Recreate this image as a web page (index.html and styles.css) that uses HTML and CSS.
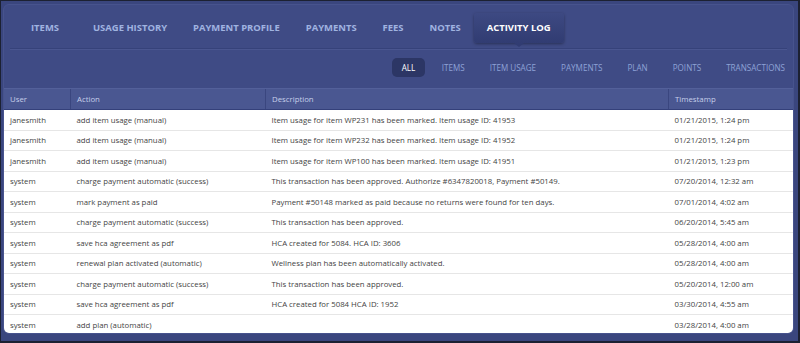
FILE: index.html
```html
<!DOCTYPE html>
<html lang="en">
<head>
    <meta charset="UTF-8">
    <title>Activity Log</title>
    <link rel="stylesheet" href="styles.css">
</head>
<body>
    <div class="frame">
        <div class="panel">
            <ul class="tabs">
                <li class="first">Items</li>
                <li>Usage History</li>
                <li>Payment Profile</li>
                <li>Payments</li>
                <li>Fees</li>
                <li>Notes</li>
                <li class="active">Activity Log</li>
            </ul>
            <ul class="filters">
                <li class="active">All</li>
                <li>Items</li>
                <li>Item Usage</li>
                <li>Payments</li>
                <li>Plan</li>
                <li>Points</li>
                <li>Transactions</li>
            </ul>
            <table class="log">
                <thead>
                    <tr>
                        <th class="col-user">User</th>
                        <th class="col-action">Action</th>
                        <th class="col-desc">Description</th>
                        <th class="col-time">Timestamp</th>
                    </tr>
                </thead>
                <tbody>
                    <tr><td>janesmith</td><td>add item usage (manual)</td><td>Item usage for item WP231 has been marked. Item usage ID: 41953</td><td>01/21/2015, 1:24 pm</td></tr>
                    <tr><td>janesmith</td><td>add item usage (manual)</td><td>Item usage for item WP232 has been marked. Item usage ID: 41952</td><td>01/21/2015, 1:24 pm</td></tr>
                    <tr><td>janesmith</td><td>add item usage (manual)</td><td>Item usage for item WP100 has been marked. Item usage ID: 41951</td><td>01/21/2015, 1:23 pm</td></tr>
                    <tr><td>system</td><td>charge payment automatic (success)</td><td>This transaction has been approved. Authorize #6347820018, Payment #50149.</td><td>07/20/2014, 12:32 am</td></tr>
                    <tr><td>system</td><td>mark payment as paid</td><td>Payment #50148 marked as paid because no returns were found for ten days.</td><td>07/01/2014, 4:02 am</td></tr>
                    <tr><td>system</td><td>charge payment automatic (success)</td><td>This transaction has been approved.</td><td>06/20/2014, 5:45 am</td></tr>
                    <tr><td>system</td><td>save hca agreement as pdf</td><td>HCA created for 5084. HCA ID: 3606</td><td>05/28/2014, 4:00 am</td></tr>
                    <tr><td>system</td><td>renewal plan activated (automatic)</td><td>Wellness plan has been automatically activated.</td><td>05/28/2014, 4:00 am</td></tr>
                    <tr><td>system</td><td>charge payment automatic (success)</td><td>This transaction has been approved.</td><td>05/20/2014, 12:00 am</td></tr>
                    <tr><td>system</td><td>save hca agreement as pdf</td><td>HCA created for 5084 HCA ID: 1952</td><td>03/30/2014, 4:55 am</td></tr>
                    <tr><td>system</td><td>add plan (automatic)</td><td></td><td>03/28/2014, 4:00 am</td></tr>
                </tbody>
            </table>
        </div>
    </div>
</body>
</html>
```

FILE: styles.css
```css
html, body {
    margin: 0;
    padding: 0;
}

body {
    font-family: "Open Sans", "Liberation Sans", sans-serif;
    background-color: #1c2132;
    width: 800px;
    height: 343px;
}

.frame {
    box-sizing: border-box;
    margin: 1px 2px 2px 1px;
    height: 340px;
    padding: 3px 4px 7px 2px;
    background-color: #3a467e;
}

.panel {
    box-sizing: border-box;
    height: 100%;
    background-color: #3f4b85;
    border: 1px solid #47538d;
    border-radius: 6px;
    overflow: hidden;
}

/* Top tabs */
.tabs {
    list-style: none;
    margin: 0 6px;
    padding: 8px 0 0 8px;
    height: 35px;
    display: flex;
    border-bottom: 1px solid #36427a;
    box-shadow: 0 1px 0 #4a5690;
}

.tabs li {
    position: relative;
    padding: 0 13px;
    height: 30px;
    line-height: 30px;
    font-size: 9.45px;
    font-weight: bold;
    text-transform: uppercase;
    color: #a0b3e0;
}

.tabs li.first {
    margin-right: 8px;
}

.tabs li.active {
    color: #ffffff;
    background: linear-gradient(#3d4982, #313c72);
    border-radius: 3px;
    box-shadow: 0 1px 3px rgba(0, 0, 0, 0.35);
}

.tabs li.active::after {
    content: "";
    position: absolute;
    left: 50%;
    bottom: -4px;
    margin-left: -5px;
    border-left: 5px solid transparent;
    border-right: 5px solid transparent;
    border-top: 4px solid #313c72;
}

/* Filters */
.filters {
    list-style: none;
    margin: 0;
    padding: 9px 0 0 0;
    height: 29px;
    display: flex;
    justify-content: flex-end;
}

.filters li {
    height: 19px;
    line-height: 19px;
    padding: 0 12.5px;
    font-size: 8.1px;
    text-transform: uppercase;
    color: #8ea2d6;
}

.filters li:last-child {
    padding-right: 8px;
}

.filters li.active {
    color: #ffffff;
    background-color: #2c3665;
    border-radius: 5px;
    padding: 0 10px;
    margin-right: 4px;
}

/* Table */
.log {
    width: 789px;
    margin-top: 1px;
    border-collapse: collapse;
    font-size: 7.8px;
    background-color: #ffffff;
    border-radius: 0 0 5px 5px;
    overflow: hidden;
}

.log th {
    height: 20px;
    padding: 0 6px;
    text-align: left;
    font-weight: normal;
    color: #c6cfea;
    background-color: #4a5791;
    border-top: 1px solid #53609a;
    border-bottom: 1px solid #34407a;
    border-left: 1px solid #3a467f;
}

.log th:first-child {
    border-left: 0;
}

.col-user { width: 54px; }
.col-action { width: 182px; }
.col-desc { width: 390px; }

.log td {
    height: 19.5px;
    padding: 0 6px;
    color: #444444;
    border-top: 1px solid #e6e6e6;
    white-space: nowrap;
}

.log tbody tr:first-child td {
    border-top: 0;
}
```
